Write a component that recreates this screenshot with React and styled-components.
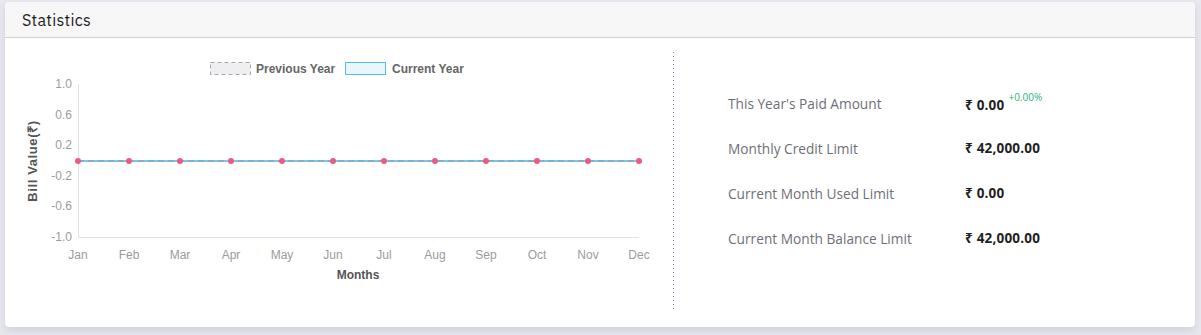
import React from "react";
import styled, { createGlobalStyle } from "styled-components";

const GlobalStyle = createGlobalStyle`
  body {
    margin: 0;
    background: #e7e7ef;
    font-family: "IBM Plex Sans", "Open Sans", "Noto Sans", sans-serif;
  }
`;

const Page = styled.div`
  padding: 2px 6px 8px 5px;
`;

const Card = styled.div`
  background: #ffffff;
  border-radius: 4px;
  box-shadow: 0 4px 6px rgba(120, 120, 150, 0.18);
  overflow: hidden;
`;

const Header = styled.div`
  height: 35px;
  background: #f7f7f7;
  border-bottom: 1px solid #cfcfcf;
  display: flex;
  align-items: center;
  padding-left: 17px;
  font-size: 16px;
  font-weight: 400;
  color: #1c1c1c;
  letter-spacing: 0.3px;
`;

const Body = styled.div`
  display: flex;
  padding: 14px 0 15px;
  height: 260px;
`;

const ChartPane = styled.div`
  width: 668px;
  margin-top: -14px;
`;

const Divider = styled.div`
  width: 1px;
  background: repeating-linear-gradient(
    to bottom,
    #5a78b0 0 1px,
    transparent 1px 4px
  );
`;

const InfoPane = styled.div`
  flex: 1;
  padding: 41px 0 0 54px;
  display: flex;
  flex-direction: column;
  gap: 25px;
`;

const Row = styled.div`
  display: flex;
  align-items: center;
  height: 20px;
`;

const Label = styled.div`
  width: 237px;
  font-size: 13.7px;
  font-weight: 400;
  color: #6f6f78;
  font-family: "Open Sans", "Noto Sans", sans-serif;
`;

const Value = styled.div`
  font-size: 13.5px;
  font-weight: 700;
  color: #1f1f24;
  font-family: "Open Sans", "Noto Sans", sans-serif;
  letter-spacing: 0.2px;
`;

const Change = styled.sup`
  font-size: 10px;
  font-weight: 400;
  color: #1fb57c;
  margin-left: 4px;
  letter-spacing: 0;
  position: relative;
  top: -3px;
`;

const months = ["Jan", "Feb", "Mar", "Apr", "May", "Jun", "Jul", "Aug", "Sep", "Oct", "Nov", "Dec"];
const ticks = ["1.0", "0.6", "0.2", "-0.2", "-0.6", "-1.0"];

const X0 = 73;
const STEP = 51;
const YTOP = 46;
const YBOT = 199;

function Chart() {
  const zero = (YTOP + YBOT) / 2 + 0.5;
  const axisFont = { fontFamily: "Liberation Sans, Arial, sans-serif", fontSize: 12 };
  return (
    <svg width="668" height="274" viewBox="0 0 668 274">
      <g style={{ ...axisFont, fontWeight: 700 }} fill="#666">
        <rect x="205.5" y="24.5" width="40" height="12" fill="#efeff1" stroke="#a8a8a8" strokeDasharray="4 3" />
        <text x="251" y="35">Previous Year</text>
        <rect x="340.5" y="24.5" width="40" height="12" fill="#eaf6fd" stroke="#55baf0" />
        <text x="387" y="35">Current Year</text>
      </g>
      <line x1={X0 + 0.5} y1={YTOP} x2={X0 + 0.5} y2={YBOT} stroke="#e2e2e2" />
      <line x1={X0} y1={YBOT + 0.5} x2={X0 + STEP * 11} y2={YBOT + 0.5} stroke="#e2e2e2" />
      <g style={axisFont} fill="#9b9b9b" textAnchor="end">
        {ticks.map((t, i) => (
          <text key={t} x={X0 - 6} y={YTOP + i * 30.6 + 4}>
            {t}
          </text>
        ))}
      </g>
      <g style={axisFont} fill="#9b9b9b" textAnchor="middle">
        {months.map((m, i) => (
          <text key={m} x={X0 + i * STEP} y={YBOT + 22}>
            {m}
          </text>
        ))}
      </g>
      <line x1={X0} y1={zero} x2={X0 + STEP * 11} y2={zero} stroke="#7cc8ec" strokeWidth="2" />
      <line x1={X0} y1={zero} x2={X0 + STEP * 11} y2={zero} stroke="#8a94a8" strokeWidth="1" strokeDasharray="6 4" />
      {months.map((m, i) => (
        <circle key={m} cx={X0 + i * STEP} cy={zero} r="3" fill="#ec5a82" />
      ))}
      <text x="353" y="241" textAnchor="middle" style={{ ...axisFont, fontWeight: 700 }} fill="#555">
        Months
      </text>
      <text
        transform="translate(32 123) rotate(-90)"
        textAnchor="middle"
        style={{ ...axisFont, fontSize: 13, fontWeight: 700, letterSpacing: 0.6 }}
        fill="#555"
      >
        Bill Value(₹)
      </text>
    </svg>
  );
}

const stats = [
  { label: "This Year's Paid Amount", value: "₹ 0.00", change: "+0.00%" },
  { label: "Monthly Credit Limit", value: "₹ 42,000.00" },
  { label: "Current Month Used Limit", value: "₹ 0.00" },
  { label: "Current Month Balance Limit", value: "₹ 42,000.00" },
];

export default function App() {
  return (
    <Page>
      <GlobalStyle />
      <Card>
        <Header>Statistics</Header>
        <Body>
          <ChartPane>
            <Chart />
          </ChartPane>
          <Divider />
          <InfoPane>
            {stats.map((s) => (
              <Row key={s.label}>
                <Label>{s.label}</Label>
                <Value>
                  {s.value}
                  {s.change && <Change>{s.change}</Change>}
                </Value>
              </Row>
            ))}
          </InfoPane>
        </Body>
      </Card>
    </Page>
  );
}
